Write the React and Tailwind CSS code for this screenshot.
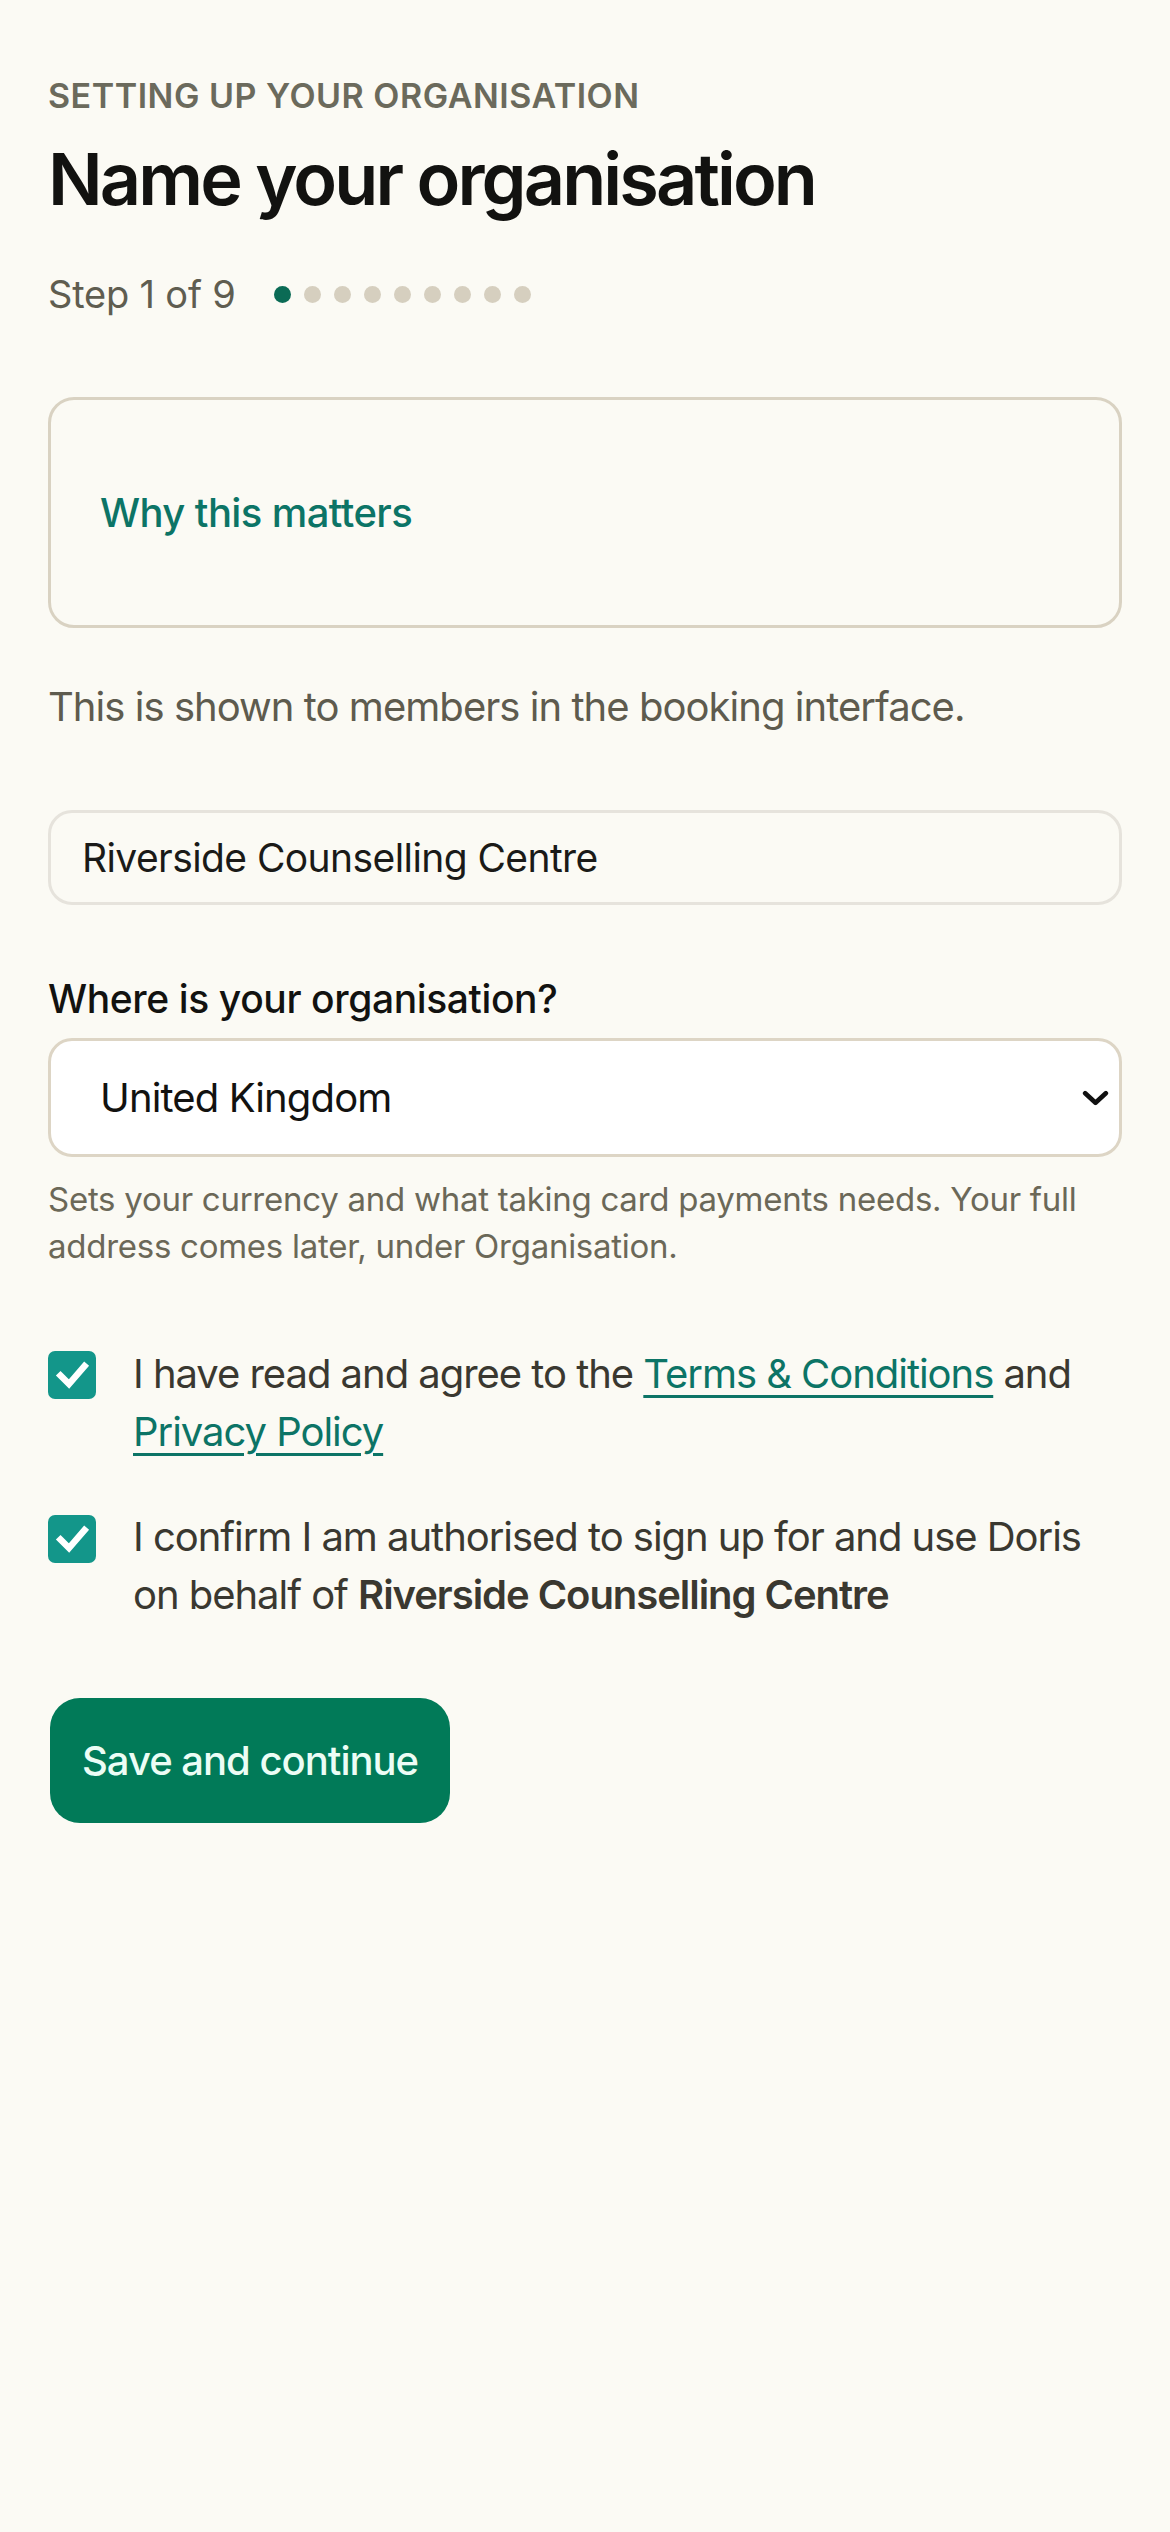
import { useState } from "react";

const STEPS = 9;

function Check() {
  return (
    <svg viewBox="0 0 48 48" className="w-[48px] h-[48px]" fill="none">
      <path
        d="M12.5 24.5l8.5 8.5L36.5 15"
        stroke="white"
        strokeWidth="6.5"
        strokeLinecap="square"
        strokeLinejoin="miter"
      />
    </svg>
  );
}

function Checkbox({ checked, onChange, offset, children }) {
  return (
    <label className="flex items-start gap-[37px] cursor-pointer">
      <span
        onClick={onChange}
        className={`${offset} shrink-0 w-[48px] h-[48px] rounded-[7px] flex items-center justify-center ${
          checked ? "bg-[#13968a]" : "bg-white border-[3px] border-[#d8d0c0]"
        }`}
      >
        {checked && <Check />}
      </span>
      <span className="text-[40px] leading-[58px] text-[#3a3830] tracking-[-0.026em]">
        {children}
      </span>
    </label>
  );
}

export default function App() {
  const [orgName, setOrgName] = useState("Riverside Counselling Centre");
  const [country, setCountry] = useState("United Kingdom");
  const [terms, setTerms] = useState(true);
  const [authorised, setAuthorised] = useState(true);

  return (
    <div
      className="min-h-screen bg-[#fbfaf4] px-[48px] pt-[76px] pb-20"
      style={{ fontFamily: "Inter, 'Noto Sans', sans-serif" }}
    >
      {/* HEADER */}
      <p className="text-[34px] leading-[40px] font-semibold uppercase text-[#6b6a5c] tracking-[0.015em]">
        Setting up your organisation
      </p>

      <h1 className="mt-[23px] text-[72px] leading-[80px] font-semibold text-[#121210] tracking-[-0.04em]">
        Name your organisation
      </h1>

      <div className="mt-[52px] flex items-center gap-[38px]">
        <span className="text-[38px] leading-[46px] text-[#5f5d50] tracking-[-0.005em]">
          Step 1 of 9
        </span>
        <div className="flex items-center gap-[13px]">
          {Array.from({ length: STEPS }).map((_, i) => (
            <span
              key={i}
              className={`w-[17px] h-[17px] rounded-full ${
                i === 0 ? "bg-[#0b6b55]" : "bg-[#d6cfbf]"
              }`}
            />
          ))}
        </div>
      </div>

      {/* WHY THIS MATTERS */}
      <div className="mt-[80px] h-[231px] rounded-[26px] border-[3px] border-[#d9d2c2] flex items-center px-[49px]">
        <span className="text-[40px] leading-[48px] font-medium text-[#0c7466] tracking-[-0.015em]">
          Why this matters
        </span>
      </div>

      <p className="mt-[51px] text-[40px] leading-[56px] text-[#5e5b4e] tracking-[-0.024em]">
        This is shown to members in the booking interface.
      </p>

      {/* NAME */}
      <input
        value={orgName}
        onChange={(e) => setOrgName(e.target.value)}
        className="mt-[75px] w-full h-[95px] rounded-[24px] border-[3px] border-[#e6e3dc] bg-[#fbfaf4] px-[31px] text-[39px] text-[#1a1a18] tracking-[-0.015em] outline-none"
      />

      {/* COUNTRY */}
      <label className="block mt-[70px] text-[39px] leading-[48px] font-medium text-[#121210] tracking-[-0.01em]">
        Where is your organisation?
      </label>

      <div className="relative mt-[15px]">
        <select
          value={country}
          onChange={(e) => setCountry(e.target.value)}
          className="appearance-none w-full h-[119px] rounded-[24px] border-[3px] border-[#ddd5c5] bg-white pl-[49px] pr-[80px] text-[40px] text-[#121210] tracking-[-0.022em] outline-none"
        >
          <option>United Kingdom</option>
          <option>Ireland</option>
          <option>United States</option>
        </select>
        <svg
          viewBox="0 0 28 16"
          className="pointer-events-none absolute right-[13px] top-1/2 -translate-y-1/2 w-[27px] h-[15px]"
          fill="none"
        >
          <path
            d="M3 3l11 10L25 3"
            stroke="#111"
            strokeWidth="5"
            strokeLinecap="round"
            strokeLinejoin="round"
          />
        </svg>
      </div>

      <p className="mt-[19px] text-[33px] leading-[47px] text-[#6b6858] tracking-[-0.008em]">
        Sets your currency and what taking card payments needs. Your full
        address comes later, under Organisation.
      </p>

      {/* CONSENT */}
      <div className="mt-[75px] flex flex-col gap-[47px]">
        <Checkbox
          checked={terms}
          onChange={() => setTerms(!terms)}
          offset="mt-[6px]"
        >
          I have read and agree to the{" "}
          <a
            href="#"
            className="text-[#0c7466] underline decoration-[3px] underline-offset-[7px]"
          >
            Terms &amp; Conditions
          </a>{" "}
          and{" "}
          <a
            href="#"
            className="text-[#0c7466] underline decoration-[3px] underline-offset-[7px]"
          >
            Privacy Policy
          </a>
        </Checkbox>

        <Checkbox
          checked={authorised}
          onChange={() => setAuthorised(!authorised)}
          offset="mt-[7px]"
        >
          I confirm I am authorised to sign up for and use Doris on behalf of{" "}
          <span className="font-semibold">{orgName}</span>
        </Checkbox>
      </div>

      <button className="mt-[74px] ml-[2px] h-[125px] px-[32px] rounded-[30px] bg-[#017a58] text-[40px] font-medium text-[#ecfdf5] tracking-[-0.025em]">
        Save and continue
      </button>
    </div>
  );
}
